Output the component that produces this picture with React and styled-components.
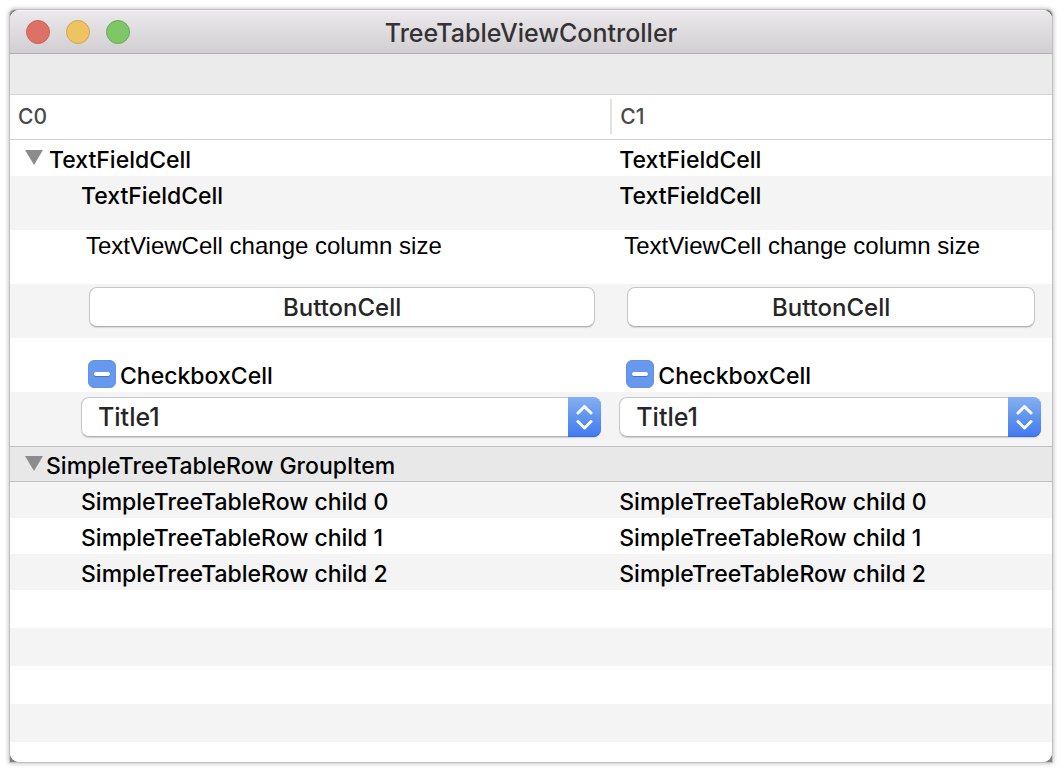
import React, { useEffect, useRef, useState } from 'react';
import styled, { createGlobalStyle, css } from 'styled-components';

const GlobalStyle = createGlobalStyle`
  *, *::before, *::after { box-sizing: border-box; }
  body {
    margin: 0;
    background: #fff;
    color: #000;
    font-family: Inter, "Liberation Sans", sans-serif;
  }
  button, select, input { font: inherit; color: inherit; margin: 0; }
`;

const Desktop = styled.div`
  display: flex;
  min-height: 100vh;
  padding: 9px;
`;

const Frame = styled.div`
  display: flex;
  flex: 1;
  min-width: 0;
  border: 1px solid #c0c0c0;
  border-radius: 6px 6px 0 0;
  background: #808080;
  box-shadow: 0 0 5px rgba(0, 0, 0, 0.3);
`;

const Window = styled.main`
  display: flex;
  flex: 1;
  flex-direction: column;
  min-width: 0;
  overflow: hidden;
  border-radius: 9px;
  background: #fff;
`;

const TitleBar = styled.header`
  display: grid;
  grid-template-columns: 1fr auto 1fr;
  align-items: center;
  height: 44px;
  padding: 0 16px;
  border-bottom: 1px solid #b1afb1;
  background: linear-gradient(#ebe9eb, #d1cfd1);
  box-shadow: inset 0 1px 0 #f5f4f5;
`;

const Lights = styled.div`
  display: flex;
  gap: 16px;
`;

const Light = styled.button`
  width: 24px;
  height: 24px;
  padding: 0;
  border: 1px solid ${(p) => p.$edge};
  border-radius: 50%;
  background: ${(p) => p.$fill};
`;

const Title = styled.h1`
  margin: 0;
  padding-top: 2px;
  color: #343234;
  font-size: 25px;
  font-weight: 500;
  line-height: 40px;
`;

const Toolbar = styled.div`
  height: 41px;
  border-bottom: 1px solid #d2d2d2;
  background: #ebebeb;
`;

const Table = styled.table`
  width: 100%;
  table-layout: fixed;
  border-spacing: 0;
  font-size: 23px;
  font-weight: 500;
`;

const FirstColumn = styled.col`
  width: 57.8%;
`;

const HeadCell = styled.th`
  height: 45px;
  padding: 4px 0 5px;
  border-bottom: 1px solid #d2d2d2;
  color: #4a4a4a;
  font-size: 21px;
  font-weight: 500;
  line-height: 35px;
  text-align: left;
`;

const HeadLabel = styled.div`
  padding-left: 8px;
  border-right: ${(p) => (p.$divider ? '2px solid #e2e2e2' : '0')};
`;

const Row = styled.tr`
  background: #fff;
  &:nth-child(even) { background: #f4f4f4; }
  ${(p) => p.$group && css`
    &&& { background: #e8e8e8; }
    td {
      border-top: 1px solid #bfbfbf;
      border-bottom: 1px solid #bfbfbf;
    }
  `}
`;

const Cell = styled.td`
  height: ${(p) => (p.$tall ? 54 : 36)}px;
  padding: 0 11px 0 ${(p) => (p.$indent ? 71 : 7)}px;
  vertical-align: top;
  white-space: nowrap;
`;

const Label = styled.div`
  padding-top: 4px;
  line-height: 32px;
`;

const Parent = styled.div`
  display: flex;
  align-items: flex-start;
  gap: ${(p) => (p.$group ? 3 : 6)}px;
  height: ${(p) => (p.$group ? 34 : 36)}px;
  padding-left: 8px;
  ${Label} { padding-top: ${(p) => (p.$group ? 3 : 4)}px; }
`;

const Disclosure = styled.button`
  display: flex;
  width: 18px;
  margin-top: ${(p) => (p.$group ? 9 : 10)}px;
  padding: 0;
  border: 0;
  background: none;
  svg { transform: ${(p) => (p.$open ? 'none' : 'rotate(-90deg)')}; }
`;

const TextView = styled.div`
  padding-left: 5px;
  font-family: "Liberation Sans", Arial, sans-serif;
  font-size: 24px;
  font-weight: 400;
  line-height: 32px;
`;

const PushButton = styled.button`
  display: block;
  width: calc(100% - 14px);
  height: 40px;
  margin: 3px 6px 0 8px;
  padding: 0;
  border: 1px solid #c8c8c8;
  border-bottom-color: #b0b0b0;
  border-radius: 8px;
  background: #fff;
  box-shadow: 0 1px 1px rgba(0, 0, 0, 0.12);
  color: #262626;
  font-size: 24px;
`;

const CheckLabel = styled.label`
  display: flex;
  align-items: center;
  gap: 4px;
  padding: 20px 0 0 7px;
  line-height: 28px;
`;

const CheckText = styled.span`
  padding-top: 4px;
`;

const Checkbox = styled.input`
  appearance: none;
  display: grid;
  place-items: center;
  width: 28px;
  height: 28px;
  border: 1px solid #6291e6;
  border-radius: 6px;
  background: #6698ee;
  &::after {
    content: '';
    width: 16px;
    height: 4px;
    border-radius: 2px;
    background: #fff;
    box-shadow: 0 1px 1px rgba(30, 70, 170, 0.5);
  }
`;

const PopUp = styled.div`
  display: grid;
  grid-template-columns: 1fr 33px;
  height: 40px;
  margin-top: 5px;
  border-radius: 8px;
  box-shadow: 0 1px 1px rgba(0, 0, 0, 0.15);
`;

const Select = styled.select`
  grid-area: 1 / 1 / 2 / 3;
  appearance: none;
  width: 100%;
  height: 40px;
  padding: 0 40px 0 16px;
  border: 1px solid #c8c8c8;
  border-bottom-color: #b0b0b0;
  border-radius: 8px;
  background: #fff;
  color: #262626;
  font-size: 25px;
`;

const Arrows = styled.span`
  grid-area: 1 / 2;
  display: flex;
  align-items: center;
  justify-content: center;
  z-index: 1;
  pointer-events: none;
  border-radius: 0 8px 8px 0;
  background: linear-gradient(#86b0f1, #6095ee 50%, #427af0);
  box-shadow: inset 0 -1px 0 #3568ea;
`;

const EmptyRows = styled.div`
  flex: 1;
  background: repeating-linear-gradient(#fff 0 38px, #f4f4f4 38px 76px);
`;

function ParentCell({ text, group, open, onToggle }) {
  return (
    <Parent $group={group}>
      <Disclosure $group={group} $open={open} onClick={onToggle} aria-expanded={open} aria-label={text}>
        <svg width="18" height="15" viewBox="0 0 18 15">
          <path d="M0 0h18L9 15z" fill="#8c8c8c" />
        </svg>
      </Disclosure>
      <Label>{text}</Label>
    </Parent>
  );
}

function MixedCheckbox() {
  const box = useRef(null);
  useEffect(() => { box.current.indeterminate = true; }, []);
  return (
    <CheckLabel>
      <Checkbox type="checkbox" ref={box} />
      <CheckText>CheckboxCell</CheckText>
    </CheckLabel>
  );
}

function PopUpButton() {
  return (
    <PopUp>
      <Select aria-label="Title" defaultValue="Title1">
        <option>Title1</option>
      </Select>
      <Arrows>
        <svg width="17" height="26" viewBox="0 0 17 26" fill="none" stroke="#fff" strokeWidth="3" strokeLinecap="round" strokeLinejoin="round">
          <path d="M2 9l6.5-6.5L15 9M2 17.500l6.500 6.500L15 17.500" />
        </svg>
      </Arrows>
    </PopUp>
  );
}

const cellRows = [
  { id: 'field', tall: true, view: <Label>TextFieldCell</Label> },
  { id: 'view', tall: true, view: <TextView>TextViewCell change column size</TextView> },
  { id: 'button', tall: true, view: <PushButton>ButtonCell</PushButton> },
  { id: 'check', tall: true, view: <MixedCheckbox /> },
  { id: 'popup', tall: true, view: <PopUpButton /> },
];

const simpleRows = [0, 1, 2].map((n) => ({
  id: `child${n}`,
  view: <Label>SimpleTreeTableRow child {n}</Label>,
}));

const renderRow = ({ id, tall, view }) => (
  <Row key={id}>
    <Cell $indent $tall={tall}>{view}</Cell>
    <Cell $tall={tall}>{view}</Cell>
  </Row>
);

export default function App() {
  const [cellsOpen, setCellsOpen] = useState(true);
  const [groupOpen, setGroupOpen] = useState(true);

  return (
    <Desktop>
      <GlobalStyle />
      <Frame>
        <Window>
          <TitleBar>
            <Lights>
              <Light aria-label="Close" $fill="#de7165" $edge="#c96459" />
              <Light aria-label="Minimize" $fill="#eec463" $edge="#d1a654" />
              <Light aria-label="Zoom" $fill="#7fc667" $edge="#69ab54" />
            </Lights>
            <Title>TreeTableViewController</Title>
          </TitleBar>
          <Toolbar />
          <Table>
            <colgroup>
              <FirstColumn />
              <col />
            </colgroup>
            <thead>
              <tr>
                <HeadCell scope="col"><HeadLabel $divider>C0</HeadLabel></HeadCell>
                <HeadCell scope="col"><HeadLabel>C1</HeadLabel></HeadCell>
              </tr>
            </thead>
            <tbody>
              <Row>
                <Cell>
                  <ParentCell text="TextFieldCell" open={cellsOpen} onToggle={() => setCellsOpen(!cellsOpen)} />
                </Cell>
                <Cell><Label>TextFieldCell</Label></Cell>
              </Row>
              {cellsOpen && cellRows.map(renderRow)}
              <Row $group>
                <Cell colSpan={2}>
                  <ParentCell group text="SimpleTreeTableRow GroupItem" open={groupOpen} onToggle={() => setGroupOpen(!groupOpen)} />
                </Cell>
              </Row>
              {groupOpen && simpleRows.map(renderRow)}
            </tbody>
          </Table>
          <EmptyRows />
        </Window>
      </Frame>
    </Desktop>
  );
}
